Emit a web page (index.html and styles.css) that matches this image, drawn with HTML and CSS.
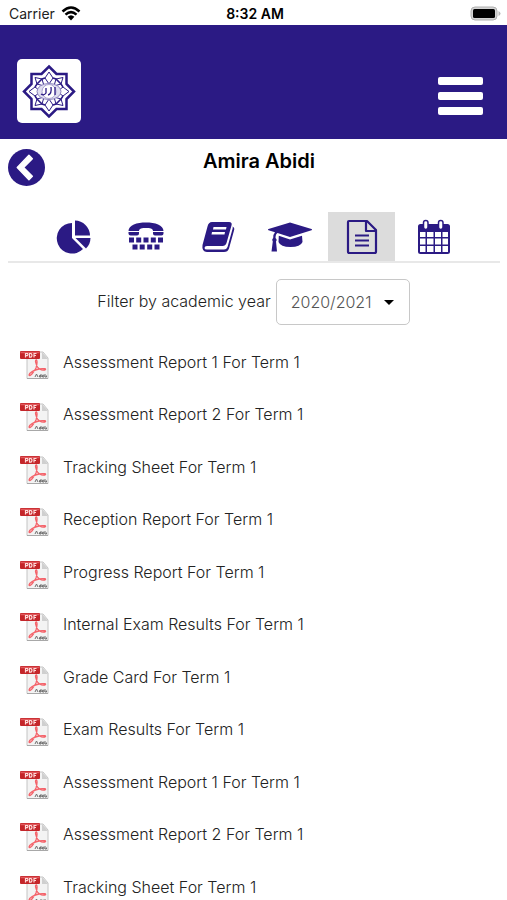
FILE: index.html
```
<!DOCTYPE html>
<html lang="en">
<head>
<meta charset="utf-8">
<meta name="viewport" content="width=device-width, initial-scale=1">
<title>Amira Abidi</title>
<link rel="stylesheet" href="styles.css">
</head>
<body>
<svg class="defs" aria-hidden="true">
  <symbol id="pdf" viewBox="0 0 30 30">
    <path d="M7 2H23L28 8V28.500H7Z" fill="#f3f3f3" stroke="#c4c4c4"/>
    <path d="M22 2L28 9H22Z" fill="#cfcfcf"/>
    <path d="M7 28.500H28" stroke="#a8a8a8"/>
    <path d="M16.500 10C14.500 10 16 14 17.500 17C19.500 20 22.500 20.500 25 20C27 19 24 18 19 19C14 20 9 23 9 25C10 27 14 22 16 18C17 14.500 17.500 11 16.500 10Z" fill="none" stroke="#f4636a" stroke-width="1.300"/>
    <rect x="0" y="1" width="20" height="8" rx="1" fill="#c4262a"/>
    <path d="M.5 2.500H19.500" stroke="#e2595c" stroke-width="1.500"/>
    <path d="M5.500 7.500V3.500H7.500Q8.500 4.700 7.500 5.700H5.500M9.500 3.500V7.200H11Q13 5.300 11 3.500ZM14 7.500V3.500H16.500M14 5.500H16" fill="none" stroke="#ffd9d9" stroke-width="1.200"/>
    <path d="M15 27L16.500 24L18 27M19.500 25.500H21V27H19.500ZM21 24V27M22.500 25.200H24V27H22.500ZM25 24V27H26.500V25.500" fill="none" stroke="#707070"/>
  </symbol>
</svg>
<div class="app">
  <div class="status">
    <div class="carrier"><span>Carrier</span>
      <svg class="wifi" viewBox="0 0 20 15"><path d="M1.500 5.500Q10-2.500 18.500 5.500M4.500 8.700Q10 3.500 15.500 8.700" fill="none" stroke="#000" stroke-width="2.500"/><path d="M6.600 10.800Q10 7.800 13.400 10.800L10 14.500Z"/></svg>
    </div>
    <div class="clock">8:32 AM</div>
    <svg class="battery" viewBox="0 0 31 15"><rect x="1" y="1" width="26" height="13" rx="4" fill="#d4d4d4" stroke="#b0b0b0"/><rect x="3" y="3" width="22" height="9" rx="1.500"/><path d="M28.500 5Q30.500 6 30.500 7.500T28.500 10Z" fill="#b8b8b8"/></svg>
  </div>
  <header class="header">
    <a class="logo" href="#" aria-label="Home">
      <svg viewBox="0 0 64 64">
        <g fill="none" stroke="#2b1a84">
          <path d="M32 7.500L39.500 15H49.500V25L57 32.500L49.500 40V50H39.500L32 57.500L24.500 50H14.500V40L7 32.500L14.500 25V15H24.500Z" stroke-width="2.500"/>
          <path d="M32 13L36 19L32 25L28 19ZM32 40L36 46L32 52L28 46ZM12 32.500L18 28L24 32.500L18 37ZM40 32.500L46 28L52 32.500L46 37ZM18 18.500L25 20L27 27L20 25ZM46 18.500L39 20L37 27L44 25ZM18 46.500L25 45L27 38L20 40ZM46 46.500L39 45L37 38L44 40Z"/>
          <path d="M28 19L25 20L20 25L18 28M36 19L39 20L44 25L46 28M28 46L25 45L20 40L18 37M36 46L39 45L44 40L46 37" stroke-width="1.500"/>
        </g>
        <ellipse cx="32" cy="32.500" rx="12" ry="8" fill="#e0def0" stroke="#8c84bd"/>
        <circle cx="32" cy="32.500" r="7" fill="#fff" stroke="#aaa4d0"/>
        <path d="M24 35Q27 37 29 34V29M31 36Q35 35 34 28M38 28V36" fill="none" stroke="#2b1a84" stroke-width="1.300"/>
      </svg>
    </a>
    <button class="menu" aria-label="Menu"><i></i><i></i><i></i></button>
  </header>
  <div class="titlebar">
    <button class="back" aria-label="Back"><svg viewBox="0 0 38 38"><circle cx="19" cy="19" r="19" fill="#2b1a84"/><path d="M21.500 6.500L25 10L16 19L25 28L21.500 31.500L9.500 19Z" fill="#fff" stroke="#fff" stroke-width="1.500" stroke-linejoin="round"/></svg></button>
    <h1>Amira Abidi</h1>
  </div>
  <nav class="tabs">
    <a href="#" aria-label="Overview"><svg viewBox="0 0 44 36"><path d="M20 4V19L31 30A15.300 15.300 0 1 1 20 4Z"/><path d="M23 1.500A15.500 15.500 0 0 1 38 16.500H23Z"/><path d="M23.500 19H38.500A15 15 0 0 1 34 29.500Z"/></svg></a>
    <a href="#" aria-label="Contact"><svg viewBox="0 0 44 36"><path d="M4.500 12C4.500 6 13 3.500 22 3.500S39.500 6 39.500 12H29C29 9.500 26 9 22 9S15 9.500 15 12Z"/><path d="M4.500 13H15V14.500Q15 16.500 13 16.500H6.500Q4.500 16.500 4.500 14.500ZM29 13H39.500V14.500Q39.500 16.500 37.500 16.500H31Q29 16.500 29 14.500Z"/><path d="M5 18.500h5v5h-5zM12.200 18.500h5v5h-5zM19.500 18.500h5v5h-5zM26.800 18.500h5v5h-5zM34 18.500h5v5h-5zM8.500 25.500h5v5h-5zM15.700 25.500h5v5h-5zM23.200 25.500h5v5h-5zM30.500 25.500h5v5h-5z"/></svg></a>
    <a href="#" aria-label="Lessons"><svg viewBox="0 0 44 36"><path fill-rule="evenodd" d="M16 3H33Q36.500 3 35.500 6.500L30.500 24Q29.500 27 26.500 27H11Q8.500 27 8.500 29Q8.500 30.500 11 30.500H28Q30.500 30.500 31.500 28L36.500 10Q37 8.500 36.500 7.500Q39 8.500 38 11.500L33 29.500Q31.800 33 28 33H11Q5.500 32.500 6.500 26L11.500 7.500Q12.500 3 16 3ZM17.500 8L17 10.500H30L30.500 8ZM16 13L15.500 15.500H28.500L29 13Z"/></svg></a>
    <a href="#" aria-label="Attainment"><svg viewBox="0 0 44 36"><path d="M22 3.500L43.500 10Q44.500 10.700 43.500 11.300L22 18L9.500 14Q7.500 15 7.500 19Q9.500 20.500 8 22.500L9 32.500H3.500L4.800 22.500Q3.500 20.500 5.200 19Q5.200 15 7 13.200L.500 11.300Q-.500 10.700.500 10Z"/><path d="M10.800 16.800L22 20.500L34 16.800L34.500 23Q32.500 28 22.500 28T10.500 23Z"/></svg></a>
    <a href="#" class="active" aria-label="Reports" aria-current="page"><svg viewBox="0 0 44 36"><path d="M9 2H27L36 11V32.500Q36 34 34.500 34H9.500Q8 34 8 32.500V3Q8 2 9 2ZM26 2V12H36M15 16.500H29M15 21.500H29M15 26.500H29" fill="none" stroke="#2b1a84" stroke-width="2.200" stroke-linejoin="round"/></svg></a>
    <a href="#" aria-label="Calendar"><svg viewBox="0 0 44 36"><path fill-rule="evenodd" d="M8.500 5H35.500Q38 5 38 7.500V32.500Q38 35 35.500 35H8.500Q6 35 6 32.500V7.500Q6 5 8.500 5ZM8 13V18H13.500V13ZM15 13V18H21.500V13ZM23 13V18H29V13ZM30.500 13V18H36V13ZM8 19.500V25.500H13.500V19.500ZM15 19.500V25.500H21.500V19.500ZM23 19.500V25.500H29V19.500ZM30.500 19.500V25.500H36V19.500ZM8 27V33H13.500V27ZM15 27V33H21.500V27ZM23 27V33H29V27ZM30.500 27V33H36V27Z"/><rect x="11.500" y="1.500" width="4.500" height="9" rx="2.200" fill="#fff" stroke="#2b1a84" stroke-width="1.500"/><rect x="26.500" y="1.500" width="4.500" height="9" rx="2.200" fill="#fff" stroke="#2b1a84" stroke-width="1.500"/></svg></a>
  </nav>
  <main>
    <div class="filter">
      <label for="year">Filter by academic year</label>
      <div class="select"><select id="year"><option>2020/2021</option></select><svg viewBox="0 0 10 5"><path d="M0 0H10L5 5Z"/></svg></div>
    </div>
    <ul class="reports">
      <li><a href="#"><svg><use href="#pdf"/></svg><span>Assessment Report 1 For Term 1</span></a></li>
      <li><a href="#"><svg><use href="#pdf"/></svg><span>Assessment Report 2 For Term 1</span></a></li>
      <li><a href="#"><svg><use href="#pdf"/></svg><span>Tracking Sheet For Term 1</span></a></li>
      <li><a href="#"><svg><use href="#pdf"/></svg><span>Reception Report For Term 1</span></a></li>
      <li><a href="#"><svg><use href="#pdf"/></svg><span>Progress Report For Term 1</span></a></li>
      <li><a href="#"><svg><use href="#pdf"/></svg><span>Internal Exam Results For Term 1</span></a></li>
      <li><a href="#"><svg><use href="#pdf"/></svg><span>Grade Card For Term 1</span></a></li>
      <li><a href="#"><svg><use href="#pdf"/></svg><span>Exam Results For Term 1</span></a></li>
      <li><a href="#"><svg><use href="#pdf"/></svg><span>Assessment Report 1 For Term 1</span></a></li>
      <li><a href="#"><svg><use href="#pdf"/></svg><span>Assessment Report 2 For Term 1</span></a></li>
      <li><a href="#"><svg><use href="#pdf"/></svg><span>Tracking Sheet For Term 1</span></a></li>
    </ul>
  </main>
</div>
</body>
</html>
```
FILE: styles.css
```
* { box-sizing: border-box; }
body { margin: 0; background: #fff; color: #222; font: 300 16px/24px Inter, "Liberation Sans", sans-serif; }
button { border: 0; padding: 0; background: none; cursor: pointer; }
svg { display: block; }
.defs { display: none; }
.app { height: 100vh; display: flex; flex-direction: column; overflow: hidden; }
.status { flex: none; display: grid; grid-template-columns: 1fr auto 1fr; align-items: center; height: 25px; padding: 2px 6px 0 9px; font-size: 14px; font-weight: 400; line-height: 20px; }
.carrier { display: flex; align-items: center; gap: 6px; }
.wifi { width: 20px; height: 15px; }
.clock { color: #000; font-weight: 600; }
.battery { width: 31px; height: 15px; justify-self: end; }
.header { flex: none; display: flex; justify-content: space-between; align-items: flex-start; height: 114px; padding: 34px 24px 0 17px; background: #2b1a84; }
.logo { width: 64px; height: 64px; border-radius: 5px; background: #fff; }
.menu { display: grid; gap: 7px; margin-top: 18px; }
.menu i { width: 45px; height: 8px; border-radius: 2px; background: #fff; }
.titlebar { flex: none; display: grid; grid-template-columns: 37px 1fr 26px; height: 73px; padding: 10px 8px 0; }
.back, .back svg { width: 37px; height: 37px; }
h1 { margin: 0; color: #000; font-size: 20px; font-weight: 600; line-height: 24px; text-align: center; }
.tabs { flex: none; display: flex; gap: 5px; margin: 0 7px 0 8px; padding: 0 32px; border-bottom: 2px solid #e8e8e8; }
.tabs a { flex: 0 0 67px; display: flex; justify-content: center; height: 49px; padding-top: 7px; fill: #2b1a84; }
.tabs .active { background: #dcdcdc; }
.tabs svg { width: 44px; height: 36px; }
main { flex: 1; min-height: 0; overflow: hidden; padding-top: 16px; }
.filter { display: flex; justify-content: center; gap: 5px; }
.filter label { padding-top: 10px; }
.select { display: grid; align-items: center; width: 134px; height: 46px; }
.select > * { grid-area: 1 / 1; }
select { appearance: none; width: 100%; height: 100%; padding: 0 14px; border: 1px solid #c8c8c8; border-radius: 5px; background: #fff; color: #555; font: inherit; }
.select svg { width: 10px; height: 5px; margin-right: 16px; justify-self: end; pointer-events: none; }
.reports { list-style: none; margin: 12px 0 0; padding: 0 20px; }
.reports li { height: 52px; }
.reports li:nth-child(even) { height: 53px; }
.reports a { display: flex; gap: 13px; padding-top: 13px; color: inherit; text-decoration: none; }
.reports svg { flex: none; width: 30px; height: 30px; }
```
